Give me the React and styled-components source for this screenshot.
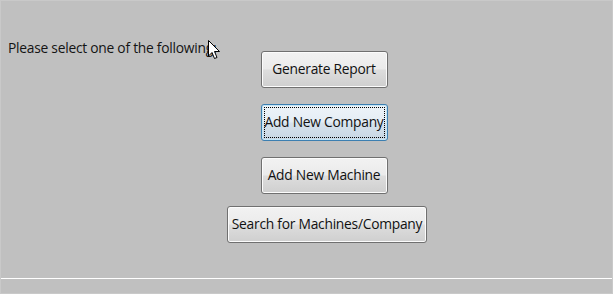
import React from 'react';
import styled, { createGlobalStyle, css } from 'styled-components';

const GlobalStyle = createGlobalStyle`
    html, body {
        margin: 0;
        padding: 0;
        background: #c0c0c0;
    }
`

const Window = styled.div`
    position: relative;
    box-sizing: border-box;
    width: 613px;
    height: 294px;
    background: #c0c0c0;
    border: 1px solid #c9c9c9;
    font-family: "Open Sans", "Noto Sans", sans-serif;
    font-size: 13.8px;
    color: #141414;
`

const Content = styled.div`
    display: flex;
    align-items: flex-start;
    padding-top: 50px;
    height: 226px;
    box-sizing: border-box;
`

const Label = styled.div`
    width: 223px;
    padding-left: 7px;
    margin-top: -13px;
    box-sizing: border-box;
    white-space: nowrap;
    letter-spacing: -0.25px;
`

const Buttons = styled.div`
    display: flex;
    flex-direction: column;
    align-items: center;
    width: 200px;
    gap: 16px;
`

const Button = styled.button`
    position: relative;
    box-sizing: border-box;
    width: ${p => p.$wide ? '200px' : '127px'};
    height: 37px;
    border: 1px solid #707070;
    border-radius: 3px;
    background: linear-gradient(#f2f2f2 0%, #ebebeb 48%, #dddddd 52%, #cfcfcf 100%);
    box-shadow: inset 0 0 0 1px #fcfcfc;
    font-family: "Open Sans", "Noto Sans", sans-serif;
    font-size: 13.8px;
    letter-spacing: -0.25px;
    color: #111;
    padding: 0 0 3px;
    cursor: default;

    ${p => p.$wide && css`
        align-self: flex-start;
        margin-left: 3px;
        margin-top: -4px;
    `}

    ${p => p.$focused && css`
        border-color: #3c7fb1;
        background: linear-gradient(#eef4f9 0%, #e4edf5 48%, #d6e2ec 52%, #c8d7e4 100%);
        box-shadow: inset 0 0 0 1px #c4e5f6;
        &::after {
            content: "";
            position: absolute;
            inset: 2px;
            border: 1px dotted #000;
        }
    `}
`

const Divider = styled.div`
    height: 1px;
    background: #ffffff;
    margin-top: 51px;
`

const Cursor = styled.svg`
    position: absolute;
    left: 207px;
    top: 39px;
`

export default function App() {
    return (
        <Window>
            <GlobalStyle />
            <Content>
                <Label>Please select one of the following:</Label>
                <Buttons>
                    <Button>Generate Report</Button>
                    <Button $focused>Add New Company</Button>
                    <Button>Add New Machine</Button>
                    <Button $wide>Search for Machines/Company</Button>
                </Buttons>
            </Content>
            <Divider />
            <Cursor width="13" height="20" viewBox="0 0 13 20">
                <path d="M0.5 0.5 L0.5 16 L4 12.5 L6.5 18.5 L9 17.5 L6.5 11.5 L11.5 11.5 Z" fill="#fff" stroke="#000" strokeWidth="1" />
            </Cursor>
        </Window>
    )
}
